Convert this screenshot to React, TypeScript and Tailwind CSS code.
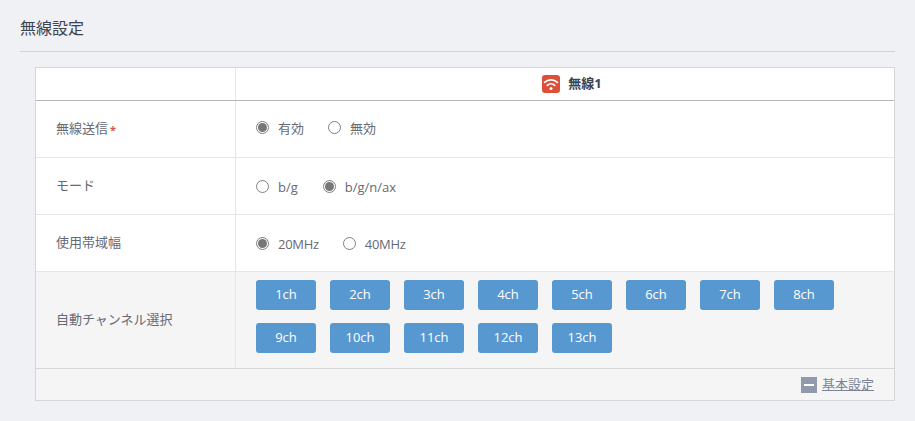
const font = { fontFamily: '"Open Sans", "Noto Sans CJK JP", sans-serif' };

const channels = ["1ch", "2ch", "3ch", "4ch", "5ch", "6ch", "7ch", "8ch", "9ch", "10ch", "11ch", "12ch", "13ch"];

function Radio({ label, checked, gap, narrow }: { label: string; checked?: boolean; gap: string; narrow?: boolean }) {
  return (
    <label className={`flex items-center ${gap}`}>
      <span className="w-[13px] h-[13px] rounded-full border border-[#808080] bg-white flex items-center justify-center -translate-y-[2px]">
        {checked && <span className="w-[9px] h-[9px] rounded-full bg-[#777777]" />}
      </span>
      <span className={narrow ? "ml-[9px] text-[13px] text-[#666a75] tracking-[-0.3px]" : "ml-[9px] text-[13px] text-[#666a75]"}>{label}</span>
    </label>
  );
}

function Row({ label, required, pad, children }: { label: string; required?: boolean; pad: string; children: React.ReactNode }) {
  return (
    <div className="flex h-[57px] border-b border-[#e4e6eb]">
      <div className="w-[200px] shrink-0 border-r border-[#e4e6eb] pl-5 flex items-center text-[13px] text-[#666a75]">
        {label}
        {required && <span className="text-[#d9534f] ml-[2px] text-[11px] font-bold translate-y-[1px]">*</span>}
      </div>
      <div className={`flex-1 pl-5 flex items-center ${pad}`}>{children}</div>
    </div>
  );
}

export default function App() {
  return (
    <div className="w-[915px] h-[421px] bg-[#eff1f5] overflow-hidden" style={font}>
      <div className="mx-5 h-[52px] border-b border-[#cfd1d5] pt-[17px] text-[16px] leading-[22px] text-[#3c4350]">
        無線設定
      </div>

      <div className="ml-[35px] mr-5 mt-[15px] border border-[#d4d6d8]">
        {/* header */}
        <div className="flex h-[33px] bg-white border-b border-[#b5b7b9]">
          <div className="w-[200px] shrink-0 border-r border-[#e4e6eb]" />
          <div className="flex-1 flex items-center justify-center gap-2 pl-[14px]">
            <svg width="18" height="18" viewBox="0 0 18 18">
              <rect width="18" height="18" rx="3" fill="#dc5039" />
              <path d="M2.6 7.4a9.4 9.4 0 0 1 12.8 0" fill="none" stroke="#fff" strokeWidth="1.8" strokeLinecap="round" />
              <path d="M5.3 10.3a5.4 5.4 0 0 1 7.4 0" fill="none" stroke="#fff" strokeWidth="1.8" strokeLinecap="round" />
              <circle cx="9" cy="13.6" r="1.5" fill="#fff" />
            </svg>
            <span className="text-[13px] font-bold text-[#3c4350]">無線1</span>
          </div>
        </div>

        <div className="bg-white">
          <Row label="無線送信" required pad="">
            <Radio label="有効" checked gap="mr-[24px]" />
            <Radio label="無効" gap="" />
          </Row>
          <Row label="モード" pad="pt-[4px]">
            <Radio label="b/g" gap="mr-[25px]" />
            <Radio label="b/g/n/ax" checked gap="" />
          </Row>
          <Row label="使用帯域幅" pad="pt-[4px]">
            <Radio label="20MHz" checked narrow gap="mr-[24px]" />
            <Radio label="40MHz" narrow gap="" />
          </Row>
        </div>

        <div className="flex h-[97px] bg-[#f5f5f5] border-b border-[#d4d6d8]">
          <div className="w-[200px] shrink-0 border-r border-[#e4e6eb] pl-5 flex items-center text-[13px] text-[#666a75]">
            自動チャンネル選択
          </div>
          <div className="flex-1 pl-5 pt-2 flex flex-wrap content-start gap-x-[14px] gap-y-[13px]">
            {channels.map((ch) => (
              <button key={ch} className="w-[60px] h-[30px] rounded-[3px] bg-[#5898d0] text-white text-[13px]">
                {ch}
              </button>
            ))}
          </div>
        </div>

        <div className="h-[31px] bg-[#f5f5f5] flex items-center justify-end pr-5 gap-[5px]">
          <span className="w-4 h-4 bg-[#9199ad] flex items-center justify-center">
            <span className="w-[10px] h-[2px] bg-white" />
          </span>
          <a className="text-[13px] text-[#7c8496] underline">基本設定</a>
        </div>
      </div>
    </div>
  );
}
